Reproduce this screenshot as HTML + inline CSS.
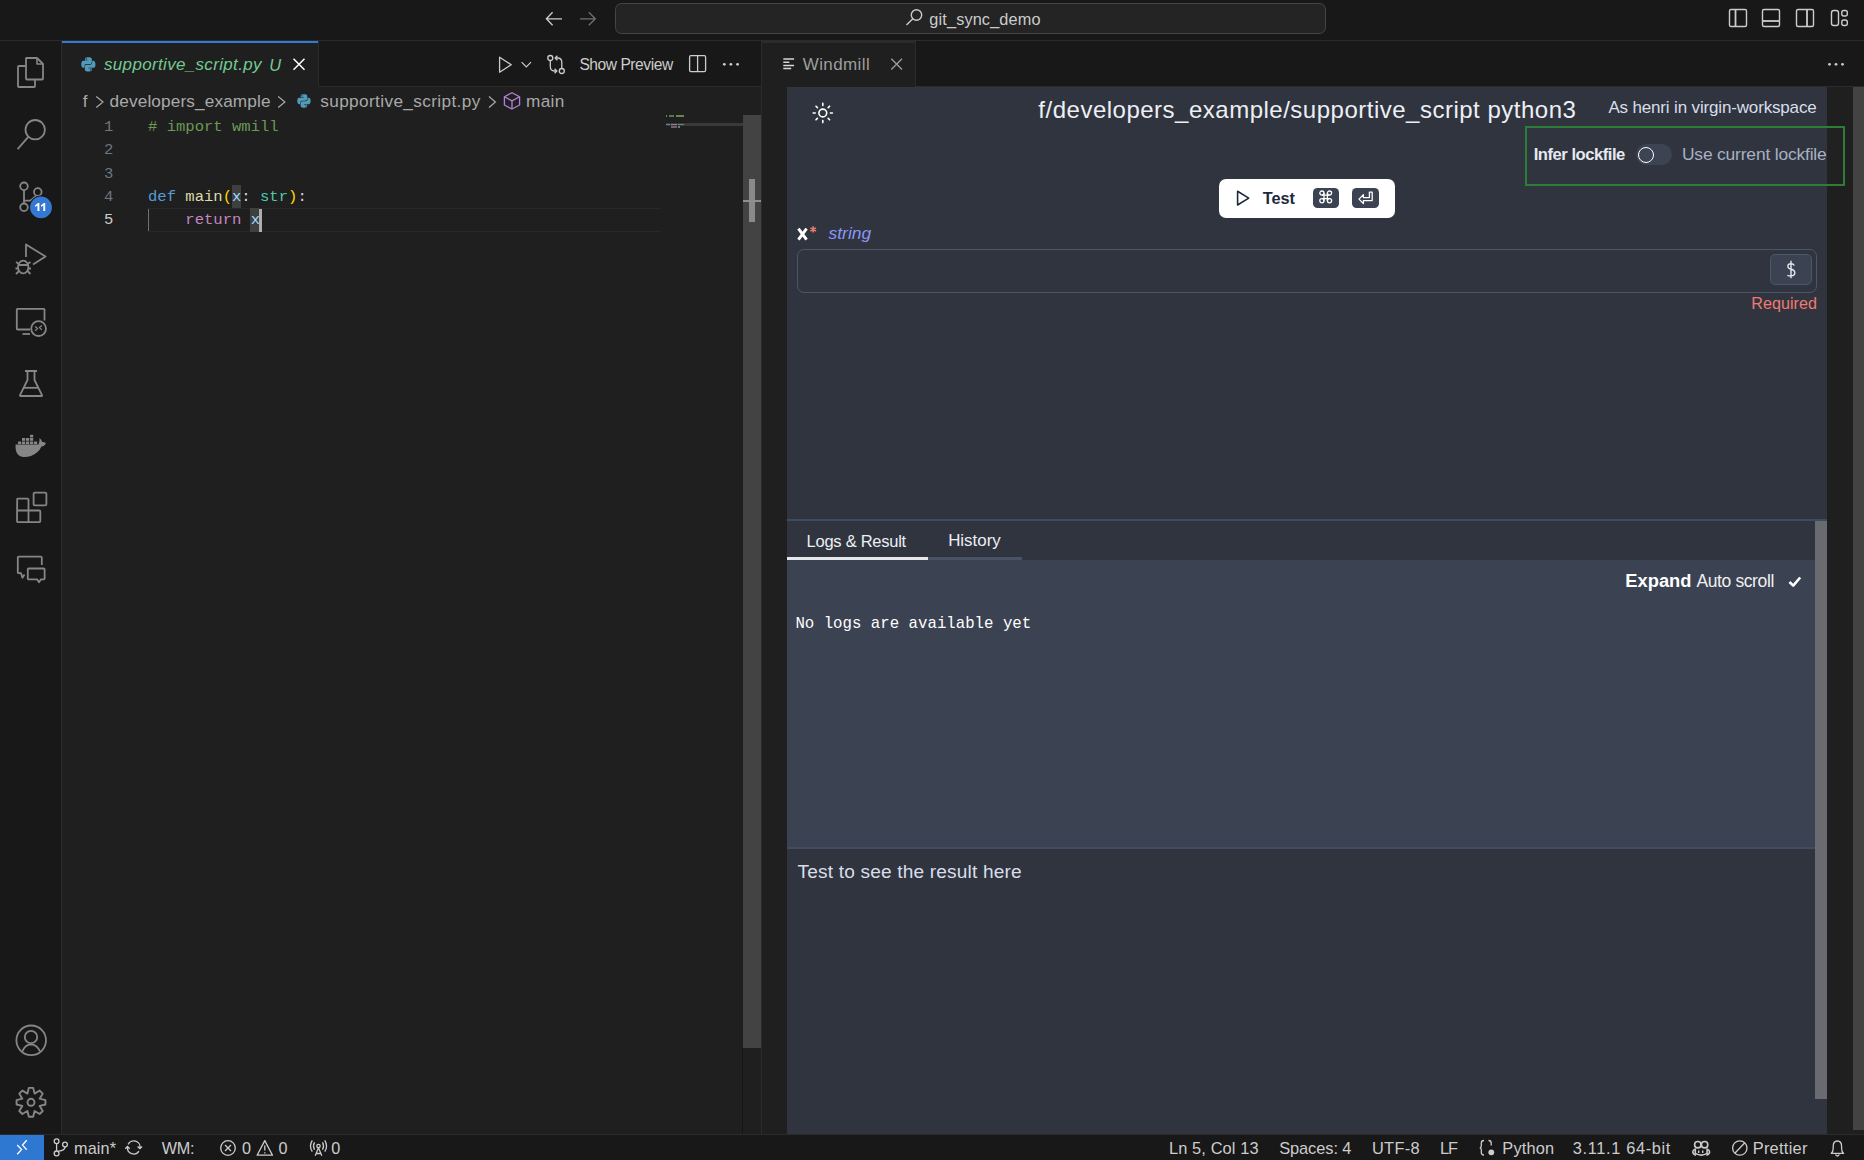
<!DOCTYPE html>
<html>
<head>
<meta charset="utf-8">
<style>
*{box-sizing:border-box;margin:0;padding:0}
html,body{width:1864px;height:1160px;overflow:hidden;background:#181818;font-family:"Liberation Sans",sans-serif;position:relative}
.abs{position:absolute}
.t{position:absolute;white-space:nowrap;line-height:1}
svg{position:absolute;overflow:visible}
.mono{font-family:"Liberation Mono",monospace}
</style>
</head>
<body>
<!-- TITLE BAR -->
<div class="abs" style="left:0;top:0;width:1864px;height:40px;background:#181818"></div>
<div class="abs" style="left:0;top:40px;width:1864px;height:1px;background:#2b2b2b"></div>


<!-- title content -->
<div class="abs" style="left:615px;top:3px;width:711px;height:31px;border-radius:6.5px;background:#242424;border:1px solid #454545"></div>
<svg width="1864" height="40" style="left:0;top:0" viewBox="0 0 1864 40" fill="none" stroke-width="1.5">
  <path d="M562 18.8 H546.4 M552.6 12.3 L546.4 18.8 L552.6 25.3" stroke="#cccccc" stroke-width="1.35"/>
  <path d="M580 18.8 H595.3 M588.8 12.3 L595.3 18.8 L588.8 25.3" stroke="#6f6f6f" stroke-width="1.35"/>
  <circle cx="916.5" cy="15" r="5.2" stroke="#cccccc" stroke-width="1.4"/>
  <path d="M912.8 18.8 L906.5 25" stroke="#cccccc" stroke-width="1.4"/>
  <!-- layout icons -->
  <g stroke="#cccccc" stroke-width="1.4">
    <rect x="1729.5" y="9.5" width="17" height="17" rx="1.5"/>
    <path d="M1735.5 9.5 V26.5" stroke-width="1.8"/>
    <rect x="1762.5" y="9.5" width="17" height="17" rx="1.5"/>
    <path d="M1762.5 21 H1779.5" stroke-width="1.8"/>
    <rect x="1796.5" y="9.5" width="17" height="17" rx="1.5"/>
    <path d="M1807 9.5 V26.5" stroke-width="1.8"/>
    <rect x="1831.5" y="10.5" width="7" height="15" rx="2.2"/>
    <rect x="1841.8" y="10.5" width="5.5" height="5.5" rx="2"/>
    <rect x="1841.8" y="20" width="5.5" height="5.5" rx="2"/>
  </g>
</svg>

<!-- ACTIVITY BAR -->
<div class="abs" style="left:0;top:41px;width:61px;height:1093px;background:#181818"></div>
<div class="abs" style="left:61px;top:41px;width:1px;height:1093px;background:#2b2b2b"></div>


<!-- activity icons -->
<svg width="62" height="1160" style="left:0;top:0" viewBox="0 0 62 1160" fill="none" stroke="#868686" stroke-width="1.8" stroke-linejoin="round">
  <!-- explorer -->
  <path d="M25.5 66 H19 Q18 66 18 67 V86 Q18 87 19 87 H34 Q35 87 35 86 V79.5"/>
  <path d="M26 58.5 Q26 58 27 58 H37 L43 64 V78.5 Q43 79.5 42 79.5 H27 Q26 79.5 26 78.5 Z"/>
  <path d="M37 58 V64 H43" stroke-width="1.6"/>
  <!-- search -->
  <circle cx="35.2" cy="129.7" r="9.7"/>
  <path d="M28.3 136.8 L17.6 149.2"/>
  <!-- scm -->
  <circle cx="24" cy="186.3" r="3.8"/>
  <circle cx="37.8" cy="192" r="3.8"/>
  <circle cx="24" cy="207.3" r="3.8"/>
  <path d="M24 190 V203.5"/>
  <path d="M24 200.6 H30.5 L36.3 195.6"/>
  <!-- run debug -->
  <path d="M26 257 V244.5 L45.5 256.5 L33 264.5"/>
  <ellipse cx="23.2" cy="267" rx="5.2" ry="6.3"/>
  <path d="M18 265 H28.5 M16 262 L19 264 M30.5 262 L27.5 264 M15.5 268.5 H18 M31 268.5 H28.5 M16 274 L19 271 M30.5 274 L27.5 271"/>
  <!-- remote -->
  <path d="M30 329.5 H17.5 Q16.8 329.5 16.8 328.8 V309.5 Q16.8 308.8 17.5 308.8 H43.8 Q44.5 308.8 44.5 309.5 V320.5"/>
  <path d="M22.5 334 H30"/>
  <circle cx="38.6" cy="328.6" r="7.4"/>
  <path d="M35.2 326.5 L37.5 328.6 L35.2 330.8 M41.8 325.5 L39.5 327.6 L41.8 329.8" stroke-width="1.3"/>
  <!-- testing flask -->
  <path d="M25 371 H37 M27.5 371 V380 L20 395.2 Q19.7 396 20.6 396 H41.6 Q42.4 396 42 395.2 L34.5 380 V371"/>
  <path d="M24 387.8 H38.5"/>
  <!-- extensions -->
  <path d="M17.2 499.5 Q17 499 17.5 498.7 H27.5 Q28.5 498.7 28.5 499.7 V510.5 H39.3 Q40.3 510.5 40.3 511.5 V521.3 Q40.3 522.2 39.3 522.2 H17.9 Q17 522.2 17 521.3 Z M17 510.5 H28.5 V522"/>
  <rect x="33.6" y="492.6" width="12.8" height="12.8" rx="1.2"/>
  <!-- chat -->
  <path d="M41.8 565 V557.5 Q41.8 556.6 40.8 556.6 H18.8 Q17.8 556.6 17.8 557.5 V572.5 Q17.8 573.2 18.6 573.2 H21 L22.4 577.8 L24.5 574.5"/>
  <path d="M28.5 568.5 H43.8 Q44.6 568.5 44.6 569.3 V578.6 Q44.6 579.3 43.8 579.3 H41 L39 582.3 L37 579.3 H28.5 Q27.8 579.3 27.8 578.6 V569.3 Q27.8 568.5 28.5 568.5 Z"/>
  <!-- account -->
  <circle cx="31.2" cy="1040.3" r="14.8"/>
  <circle cx="31" cy="1037" r="6.2"/>
  <path d="M22.3 1051.5 Q25 1044.5 31 1044.3 Q37 1044.5 40 1051.5"/>
  <!-- gear -->
  <path d="M28.83 1087.86 L33.17 1087.86 L34.60 1093.62 L39.67 1090.56 L42.74 1093.63 L39.68 1098.70 L45.44 1100.13 L45.44 1104.47 L39.68 1105.90 L42.74 1110.97 L39.67 1114.04 L34.60 1110.98 L33.17 1116.74 L28.83 1116.74 L27.40 1110.98 L22.33 1114.04 L19.26 1110.97 L22.32 1105.90 L16.56 1104.47 L16.56 1100.13 L22.32 1098.70 L19.26 1093.63 L22.33 1090.56 L27.40 1093.62 Z" stroke-width="1.9"/>
  <circle cx="31" cy="1102.3" r="3.5" stroke-width="1.9"/>
</svg>
<svg width="62" height="1160" style="left:0;top:0" viewBox="0 0 62 1160">
  <!-- docker -->
  <path fill="#868686" d="M15.6 444.5 H38.5 Q40 441 39.5 438 Q41.5 439.5 42.2 442 Q45 441.5 46 443.5 Q44.5 446 41.5 446.5 Q38.5 453 31 456 Q27 457.3 23 457 Q17 456 15.8 450 Q15.4 447 15.6 444.5 Z"/>
  <g fill="#868686">
    <rect x="18" y="441.5" width="3.2" height="2.6"/><rect x="22" y="441.5" width="3.2" height="2.6"/><rect x="26" y="441.5" width="3.2" height="2.6"/><rect x="30" y="441.5" width="3.2" height="2.6"/><rect x="34" y="441.5" width="3.2" height="2.6"/>
    <rect x="22" y="438" width="3.2" height="2.8"/><rect x="26" y="438" width="3.2" height="2.8"/><rect x="30" y="438" width="3.2" height="2.8"/>
    <rect x="30" y="434.8" width="3.2" height="2.6"/>
  </g>
  <!-- scm badge -->
  <circle cx="41" cy="207.4" r="11.8" fill="#181818"/>
  <circle cx="41" cy="207.4" r="10.9" fill="#3478d2"/>
  <path fill="#ffffff" d="M35.2 205.3 L38.1 203.1 H39.4 V210.9 H37.5 V205.6 L35.2 207.1 Z M41 205.3 L43.9 203.1 H45.2 V210.9 H43.3 V205.6 L41 207.1 Z"/>
</svg>


<!-- LEFT EDITOR GROUP -->
<div class="abs" style="left:62px;top:41px;width:699px;height:45px;background:#181818"></div>
<div class="abs" style="left:62px;top:86px;width:699px;height:1px;background:#2b2b2b"></div>
<div class="abs" style="left:62px;top:41px;width:256px;height:46px;background:#1f1f1f"></div>
<div class="abs" style="left:62px;top:41px;width:256px;height:2px;background:#2f7bd6"></div>
<div class="abs" style="left:318px;top:41px;width:1px;height:45px;background:#2b2b2b"></div>
<div class="abs" style="left:62px;top:87px;width:699px;height:1047px;background:#1f1f1f"></div>
<!-- group divider -->
<div class="abs" style="left:761px;top:41px;width:1px;height:1093px;background:#2b2b2b"></div>

<!-- RIGHT EDITOR GROUP -->
<div class="abs" style="left:762px;top:41px;width:1102px;height:45px;background:#181818"></div>
<div class="abs" style="left:762px;top:86px;width:1102px;height:1px;background:#2b2b2b"></div>
<div class="abs" style="left:762px;top:41px;width:153px;height:46px;background:#1f1f1f"></div>
<div class="abs" style="left:915px;top:41px;width:1px;height:45px;background:#2b2b2b"></div>
<div class="abs" style="left:762px;top:41px;width:153px;height:2px;background:#2b2b2b"></div>
<div class="abs" style="left:762px;top:87px;width:1102px;height:1047px;background:#1f1f1f"></div>

<!-- WEBVIEW -->
<div class="abs" style="left:787px;top:87px;width:1040px;height:1047px;background:#30343f"></div>

<!-- STATUS BAR -->
<div class="abs" style="left:0;top:1134px;width:1864px;height:1px;background:#2b2b2b"></div>
<div class="abs" style="left:0;top:1135px;width:1864px;height:25px;background:#181818"></div>
<div class="abs" style="left:0;top:1135px;width:44px;height:25px;background:#2f78d2"></div>


<!-- LEFT TAB ICONS & ACTIONS -->
<svg width="1864" height="120" style="left:0;top:0" viewBox="0 0 1864 120" fill="none">
  <!-- python icon in tab -->
  <g transform="translate(81,57) scale(0.92)">
    <path fill="#519aba" d="M7.9 0.2C4 0.2 4.3 1.9 4.3 1.9V3.7H8V4.2H2.8S0.3 3.9 0.3 7.9 2.5 11.8 2.5 11.8H3.8V9.9S3.7 7.7 6 7.7H9.7S11.8 7.7 11.8 5.6V2.2S12.1 0.2 7.9 0.2ZM5.8 1.4A.7.7 0 1 1 5.8 2.8.7.7 0 0 1 5.8 1.4Z"/>
    <path fill="#519aba" d="M8.1 15.8C12 15.8 11.7 14.1 11.7 14.1V12.3H8V11.8H13.2S15.7 12.1 15.7 8.1 13.5 4.2 13.5 4.2H12.2V6.1S12.3 8.3 10 8.3H6.3S4.2 8.3 4.2 10.4V13.8S3.9 15.8 8.1 15.8ZM10.2 14.6A.7.7 0 1 1 10.2 13.2.7.7 0 0 1 10.2 14.6Z"/>
  </g>
  <!-- close X -->
  <path d="M293.5 58.8 L304.5 69.8 M304.5 58.8 L293.5 69.8" stroke="#ffffff" stroke-width="1.5"/>
  <!-- play -->
  <path d="M499.6 57.2 V72.2 L511.2 64.7 Z" stroke="#cccccc" stroke-width="1.3" stroke-linejoin="round"/>
  <path d="M521.6 62.2 L526.3 66.9 L531 62.2" stroke="#cccccc" stroke-width="1.2"/>
  <!-- compare -->
  <g stroke="#cccccc" stroke-width="1.3">
    <circle cx="550.3" cy="58" r="2.5"/>
    <circle cx="561.8" cy="71" r="2.5"/>
    <path d="M550.3 60.5 V66.5 Q550.3 71 554.5 71 H557"/>
    <path d="M554.6 68.8 L556.8 71 L554.6 73.2"/>
    <path d="M561.8 68.5 V62.5 Q561.8 58 557.6 58 H555"/>
    <path d="M557.4 55.8 L555.2 58 L557.4 60.2"/>
  </g>
  <!-- split -->
  <rect x="689.6" y="55.6" width="16" height="16" rx="1.3" stroke="#cccccc" stroke-width="1.3"/>
  <path d="M697.6 55.6 V71.6" stroke="#cccccc" stroke-width="1.3"/>
  <!-- more -->
  <g fill="#cccccc"><circle cx="724.3" cy="64.3" r="1.4"/><circle cx="730.9" cy="64.3" r="1.4"/><circle cx="737.6" cy="64.3" r="1.4"/></g>
  <!-- breadcrumb chevrons -->
  <path d="M96.3 96.5 L103 102 L96.3 107.5 M278.2 96.5 L284.9 102 L278.2 107.5 M489 96.5 L495.4 102 L489 107.5" stroke="#a9a9a9" stroke-width="1.2"/>
  <!-- breadcrumb python -->
  <g transform="translate(297,94) scale(0.87)">
    <path fill="#519aba" d="M7.9 0.2C4 0.2 4.3 1.9 4.3 1.9V3.7H8V4.2H2.8S0.3 3.9 0.3 7.9 2.5 11.8 2.5 11.8H3.8V9.9S3.7 7.7 6 7.7H9.7S11.8 7.7 11.8 5.6V2.2S12.1 0.2 7.9 0.2ZM5.8 1.4A.7.7 0 1 1 5.8 2.8.7.7 0 0 1 5.8 1.4Z"/>
    <path fill="#519aba" d="M8.1 15.8C12 15.8 11.7 14.1 11.7 14.1V12.3H8V11.8H13.2S15.7 12.1 15.7 8.1 13.5 4.2 13.5 4.2H12.2V6.1S12.3 8.3 10 8.3H6.3S4.2 8.3 4.2 10.4V13.8S3.9 15.8 8.1 15.8ZM10.2 14.6A.7.7 0 1 1 10.2 13.2.7.7 0 0 1 10.2 14.6Z"/>
  </g>
  <!-- cube -->
  <g stroke="#b180d7" stroke-width="1.3" stroke-linejoin="round">
    <path d="M512 92.7 L519.6 96.8 V105 L512 109 L504.4 105 V96.8 Z"/>
    <path d="M504.4 96.8 L512 100.9 L519.6 96.8 M512 100.9 V109"/>
  </g>
  <!-- windmill tab icon -->
  <g stroke="#d6d6d6" stroke-width="1.5">
    <path d="M783.3 59 H794.1 M783.3 62.2 H789.3 M783.3 65.4 H794.1 M783.3 68.6 H791.2"/>
  </g>
  <path d="M891.3 58.8 L902 69.5 M902 58.8 L891.3 69.5" stroke="#9d9d9d" stroke-width="1.3"/>
  <g fill="#cccccc"><circle cx="1829.5" cy="64.3" r="1.4"/><circle cx="1836" cy="64.3" r="1.4"/><circle cx="1842.5" cy="64.3" r="1.4"/></g>
</svg>

<!-- CODE -->
<div class="abs" style="left:148px;top:208.4px;width:513px;height:23.3px;border-top:1.5px solid #282828;border-bottom:1.5px solid #282828"></div>
<div class="abs" style="left:148px;top:209px;width:1.2px;height:22px;background:#707070"></div>
<div class="abs" style="left:232px;top:185.1px;width:9.3px;height:23.3px;background:#3f3f3f"></div>
<div class="abs" style="left:250px;top:208.4px;width:9.3px;height:23.3px;background:#3f3f3f"></div>
<div class="abs" style="left:259.2px;top:208.8px;width:2.8px;height:22.8px;background:#aeafad"></div>
<div class="code" style="position:absolute;left:148px;top:0;font-family:'Liberation Mono',monospace;font-size:15.55px;line-height:1;white-space:pre">
<div class="abs" style="left:0;top:120.1px"><span style="color:#6a9955"># import wmill</span></div>
<div class="abs" style="left:0;top:190px"><span style="color:#569cd6">def</span> <span style="color:#dcdcaa">main</span><span style="color:#ffd700">(</span><span style="color:#9cdcfe">x</span><span style="color:#d4d4d4">: </span><span style="color:#4ec9b0">str</span><span style="color:#ffd700">)</span><span style="color:#d4d4d4">:</span></div>
<div class="abs" style="left:0;top:213.3px">    <span style="color:#c586c0">return</span> <span style="color:#9cdcfe">x</span></div>
</div>
<div style="position:absolute;left:0;top:0;font-family:'Liberation Mono',monospace;font-size:15.55px;line-height:1;white-space:pre;color:#6e7681">
<div class="abs" style="left:104px;top:120.1px">1</div>
<div class="abs" style="left:104px;top:143.4px">2</div>
<div class="abs" style="left:104px;top:166.7px">3</div>
<div class="abs" style="left:104px;top:190px">4</div>
<div class="abs" style="left:104px;top:213.3px;color:#cccccc">5</div>
</div>
<!-- minimap -->
<div class="abs" style="left:666px;top:123px;width:77px;height:3px;background:#3a3a3a"></div>
<div class="abs" style="left:666px;top:115.3px;width:1.2px;height:1.8px;background:#5f8a4c"></div>
<div class="abs" style="left:668.5px;top:115.3px;width:5.8px;height:1.8px;background:#557a45"></div>
<div class="abs" style="left:675.8px;top:115.3px;width:8.2px;height:1.8px;background:#5f8a4c"></div>
<div class="abs" style="left:666px;top:123.5px;width:3.5px;height:1.8px;background:#5e86ad"></div>
<div class="abs" style="left:670.8px;top:123.5px;width:6px;height:1.8px;background:#8d8c78"></div>
<div class="abs" style="left:678px;top:123.5px;width:6px;height:1.8px;background:#5e8a80"></div>
<div class="abs" style="left:671px;top:126.1px;width:5.8px;height:1.7px;background:#7a5a77"></div>
<div class="abs" style="left:678.2px;top:126.1px;width:1.6px;height:1.7px;background:#6a7a88"></div>
<!-- scrollbar -->
<div class="abs" style="left:743px;top:115px;width:18px;height:933px;background:#434343"></div>
<div class="abs" style="left:742px;top:1048px;width:1px;height:86px;background:#151515"></div>
<div class="abs" style="left:749px;top:179px;width:6px;height:43px;background:#8a8a8a"></div>
<div class="abs" style="left:743px;top:199.5px;width:18px;height:2px;background:#8f8f8f"></div>


<!-- WEBVIEW DETAILS -->
<!-- right strip gray -->
<div class="abs" style="left:1853px;top:87px;width:11px;height:1043px;background:#434343"></div>
<!-- sun icon -->
<svg width="40" height="40" style="left:803px;top:92.5px" viewBox="0 0 40 40" fill="none" stroke="#ffffff" stroke-width="1.6" stroke-linecap="round">
  <circle cx="19.8" cy="20" r="3.9"/>
  <path d="M19.8 10.4 V12.4 M19.8 27.6 V29.6 M10.2 20 H12.2 M27.4 20 H29.4 M13 13.2 L14.4 14.6 M25.2 25.4 L26.6 26.8 M13 26.8 L14.4 25.4 M25.2 14.6 L26.6 13.2"/>
</svg>
<!-- green box: dark region inside right of panel -->
<div class="abs" style="left:1827px;top:126px;width:18px;height:59px;background:#202120"></div>
<div class="abs" style="left:1525px;top:125.5px;width:320px;height:60px;border:2px solid #2e7d36"></div>
<!-- toggle -->
<div class="abs" style="left:1636.3px;top:144.2px;width:35.5px;height:20.7px;border-radius:10.5px;background:#3c4352"></div>
<div class="abs" style="left:1638.2px;top:146.8px;width:16px;height:16px;border-radius:50%;border:1.6px solid #ffffff;background:#3c4352"></div>
<!-- Test button -->
<div class="abs" style="left:1219px;top:179px;width:176px;height:39px;border-radius:7px;background:#ffffff"></div>
<svg width="20" height="20" style="left:1235px;top:188px" viewBox="0 0 20 20" fill="none">
  <path d="M2.6 3.3 V17 L13.7 10.15 Z" stroke="#1e293b" stroke-width="1.6" stroke-linejoin="round"/>
</svg>
<div class="abs" style="left:1312.7px;top:188px;width:26.3px;height:20.4px;border-radius:4.5px;background:#3b4252"></div>
<div class="abs" style="left:1352px;top:188px;width:27.2px;height:20.4px;border-radius:4.5px;background:#3b4252"></div>
<svg width="20" height="20" style="left:1316px;top:188px" viewBox="0 0 20 20" fill="none" stroke="#ffffff" stroke-width="1.3">
  <path d="M8 5.1 V12.7 M11.4 5.1 V12.7 M5.9 7.2 H13.5 M5.9 10.6 H13.5"/>
  <circle cx="5.9" cy="5.1" r="2.1"/><circle cx="13.5" cy="5.1" r="2.1"/><circle cx="5.9" cy="12.7" r="2.1"/><circle cx="13.5" cy="12.7" r="2.1"/>
</svg>
<svg width="20" height="20" style="left:1356px;top:188px" viewBox="0 0 20 20" fill="none" stroke="#ffffff" stroke-width="1.3" stroke-linejoin="round">
  <path d="M16.2 4.2 V12.6 H7.4 V15.6 L3 11.1 L7.4 6.6 V9.6 H13.4 V4.2 Z"/>
</svg>
<!-- x* label -->
<svg width="30" height="30" style="left:795px;top:222px" viewBox="0 0 30 30" fill="none">
  <path d="M3.4 6.6 L11.6 17.6 M11.6 6.6 L3.4 17.6" stroke="#ffffff" stroke-width="2.9"/>
  <path d="M18.2 4.3 V10.6 M15.4 5.9 L21 9 M15.4 9 L21 5.9" stroke="#f07a72" stroke-width="1.5"/>
</svg>
<!-- input -->
<div class="abs" style="left:797px;top:249px;width:1020px;height:44px;border-radius:7px;border:1.3px solid #4c566a"></div>
<div class="abs" style="left:1770.2px;top:254.2px;width:41.4px;height:30.8px;border-radius:5px;border:1px solid #4c566a;background:#3b4252"></div>
<svg width="20" height="24" style="left:1781px;top:259px" viewBox="0 0 20 24" fill="none" stroke="#e5e9f0" stroke-width="1.4">
  <path d="M13.3 6.6 Q12.5 4.7 9.8 4.7 Q6.9 4.7 6.9 7.3 Q6.9 9.5 10 10.2 Q13.8 11 13.8 13.8 Q13.8 16.9 10 16.9 Q7.5 16.9 6.4 16.3 M10 1.7 V19.3"/>
</svg>
<!-- splitter 1 -->
<div class="abs" style="left:787px;top:519px;width:1040px;height:2px;background:#3e4a5e"></div>
<!-- logs tabs -->
<div class="abs" style="left:787px;top:557px;width:141px;height:3px;background:#e5e7eb"></div>
<div class="abs" style="left:928px;top:557px;width:94px;height:3px;background:#4a5366"></div>
<div class="abs" style="left:1022px;top:559.5px;width:793px;height:1px;background:#4c566a"></div>
<!-- logs area -->
<div class="abs" style="left:787px;top:560px;width:1028px;height:287.5px;background:#3b4252"></div>
<svg width="20" height="20" style="left:1785px;top:571px" viewBox="0 0 20 20" fill="none">
  <path d="M4.5 11 L8.2 14.6 L15.2 6.5" stroke="#ffffff" stroke-width="2.6" stroke-linejoin="round"/>
</svg>
<!-- splitter 2 -->
<div class="abs" style="left:787px;top:847.3px;width:1028px;height:1.5px;background:#404c5f"></div>
<!-- webview scrollbar -->
<div class="abs" style="left:1815px;top:521px;width:12px;height:578px;background:#6a6b71"></div>


<!-- STATUS BAR ICONS -->
<svg width="1864" height="30" style="left:0;top:1130px" viewBox="0 1130 1864 30" fill="none" stroke="#cccccc" stroke-width="1.3">
  <!-- remote -->
  <path d="M17.2 1145 L21.6 1149.5 L17.2 1154.2 M26.7 1140.3 L22.5 1145.1 L26.7 1149.7" stroke="#ffffff" stroke-width="1.3"/>
  <!-- branch -->
  <circle cx="56.6" cy="1141.3" r="2.4"/>
  <circle cx="56.6" cy="1153.4" r="2.4"/>
  <circle cx="65" cy="1144.6" r="2.4"/>
  <path d="M56.6 1143.7 V1151 M65 1147 Q65 1150.5 58.5 1151.2"/>
  <!-- sync -->
  <path d="M128.2 1144.4 A6.2 6.2 0 0 1 139.9 1148.2 M137.6 1146.5 L139.9 1148.7 L142 1146.5"/>
  <path d="M138.9 1151.2 A6.2 6.2 0 0 1 127.5 1147.4 M125.3 1148.7 L127.5 1146.5 L129.7 1148.7"/>
  <!-- error -->
  <circle cx="228" cy="1148" r="7.3"/>
  <path d="M225 1145 L231 1151 M231 1145 L225 1151"/>
  <!-- warning -->
  <path d="M264.8 1140.6 L272.5 1155.2 H257.1 Z" stroke-linejoin="round"/>
  <path d="M264.8 1145.5 V1150.5 M264.8 1152.3 V1153.4"/>
  <!-- broadcast -->
  <circle cx="318.5" cy="1146" r="1.7"/>
  <path d="M318.5 1147.8 L315.2 1155.8 M318.5 1147.8 L321.8 1155.8 M315.9 1153.5 H321.1"/>
  <path d="M314.5 1142.3 Q312.5 1146 314.5 1149.7 M322.5 1142.3 Q324.5 1146 322.5 1149.7 M312.3 1140.3 Q308.6 1146 312.3 1151.7 M324.7 1140.3 Q328.4 1146 324.7 1151.7"/>
  <!-- braces -->
  <path d="M1484 1140.5 Q1481.3 1140.5 1481.3 1143 V1146 Q1481.3 1147.6 1479.8 1147.8 Q1481.3 1148 1481.3 1149.6 V1152.5 Q1481.3 1155 1484 1155"/>
  <path d="M1488.5 1140.5 Q1491.2 1140.5 1491.2 1143 V1145.5"/>
  <circle cx="1491.3" cy="1152.3" r="2.9" fill="#cccccc" stroke="none"/>
  <!-- copilot -->
  <circle cx="1697.8" cy="1144.7" r="3.2" stroke-width="1.6"/>
  <circle cx="1704.6" cy="1144.7" r="3.2" stroke-width="1.6"/>
  <path d="M1695.3 1148.6 V1153.4 Q1701.2 1156.8 1707.1 1153.4 V1148.6" stroke-width="1.6"/>
  <path d="M1695 1149.3 Q1692.8 1150.2 1692.8 1152 Q1693 1154.3 1696 1155.2 M1707.4 1149.3 Q1709.6 1150.2 1709.6 1152 Q1709.4 1154.3 1706.4 1155.2" stroke-width="1.6"/>
  <path d="M1698.7 1150.4 V1153 M1702.7 1150.4 V1153" stroke-width="1.4"/>
  <!-- prohibit -->
  <circle cx="1739.8" cy="1148" r="7.2"/>
  <path d="M1744.8 1142.8 L1734.8 1153.2"/>
  <!-- bell -->
  <path d="M1831.2 1153.4 H1843.6 Q1841.6 1151.6 1841.6 1148.5 V1146.5 Q1841.6 1141 1837.4 1141 Q1833.2 1141 1833.2 1146.5 V1148.5 Q1833.2 1151.6 1831.2 1153.4 Z" stroke-linejoin="round"/>
  <path d="M1835.6 1154.4 Q1836 1156 1837.4 1156 Q1838.8 1156 1839.2 1154.4"/>
</svg>

<div class="t" style="left:929.35px;top:10.53px;font-size:16.3px;color:#cccccc;letter-spacing:0.134px;">git_sync_demo</div>
<div class="t" style="left:104.00px;top:56.38px;font-size:17.0px;color:#73c991;font-style:italic;letter-spacing:0.331px;">supportive_script.py</div>
<div class="t" style="left:269.35px;top:56.89px;font-size:16.4px;color:#73c991;font-style:italic;">U</div>
<div class="t" style="left:579.38px;top:56.82px;font-size:15.6px;color:#cccccc;letter-spacing:-0.458px;">Show Preview</div>
<div class="t" style="left:82.63px;top:93.14px;font-size:17.0px;color:#a9a9a9;">f</div>
<div class="t" style="left:109.61px;top:92.97px;font-size:17.2px;color:#a9a9a9;letter-spacing:0.135px;">developers_example</div>
<div class="t" style="left:320.26px;top:92.67px;font-size:17.2px;color:#a9a9a9;letter-spacing:0.378px;">supportive_script.py</div>
<div class="t" style="left:525.97px;top:92.67px;font-size:17.2px;color:#a9a9a9;letter-spacing:0.339px;">main</div>
<div class="t" style="left:802.80px;top:56.13px;font-size:17.0px;color:#9d9d9d;letter-spacing:0.376px;">Windmill</div>
<div class="t" style="left:1038.36px;top:98.02px;font-size:24.0px;color:#eceff4;letter-spacing:0.501px;">f/developers_example/supportive_script python3</div>
<div class="t" style="left:1608.40px;top:98.84px;font-size:17.0px;color:#d8dee9;letter-spacing:-0.158px;">As henri in virgin-workspace</div>
<div class="t" style="left:1533.70px;top:146.57px;font-size:16.6px;color:#e5e9f0;font-weight:700;letter-spacing:-0.473px;">Infer lockfile</div>
<div class="t" style="left:1681.98px;top:145.90px;font-size:17.4px;color:#a7b1c2;letter-spacing:-0.163px;">Use current lockfile</div>
<div class="t" style="left:1262.84px;top:189.63px;font-size:16.3px;color:#1e293b;font-weight:700;letter-spacing:-0.031px;">Test</div>
<div class="t" style="left:828.60px;top:224.80px;font-size:17.4px;color:#8a96f7;font-style:italic;">string</div>
<div class="t" style="left:1751.21px;top:294.50px;font-size:16.1px;color:#f07a72;letter-spacing:0.051px;">Required</div>
<div class="t" style="left:806.58px;top:532.86px;font-size:16.5px;color:#eceff4;letter-spacing:-0.261px;">Logs &amp; Result</div>
<div class="t" style="left:948.15px;top:533.22px;font-size:16.9px;color:#eceff4;letter-spacing:0.012px;">History</div>
<div class="t" style="left:1625.30px;top:571.94px;font-size:18.3px;color:#ffffff;font-weight:700;letter-spacing:0.023px;">Expand</div>
<div class="t" style="left:1696.50px;top:572.61px;font-size:17.5px;color:#f0f0f0;letter-spacing:-0.391px;">Auto scroll</div>
<div class="t" style="left:795.40px;top:616.53px;font-size:15.72px;color:#ffffff;font-family:'Liberation Mono',monospace;">No logs are available yet</div>
<div class="t" style="left:797.62px;top:861.66px;font-size:19.1px;color:#d8dee9;letter-spacing:0.169px;">Test to see the result here</div>
<div class="t" style="left:74.03px;top:1140.31px;font-size:16.2px;color:#cccccc;letter-spacing:0.151px;">main*</div>
<div class="t" style="left:161.80px;top:1140.31px;font-size:16.2px;color:#cccccc;letter-spacing:-0.332px;">WM:</div>
<div class="t" style="left:241.91px;top:1140.31px;font-size:16.2px;color:#cccccc;">0</div>
<div class="t" style="left:278.51px;top:1140.31px;font-size:16.2px;color:#cccccc;">0</div>
<div class="t" style="left:331.31px;top:1140.31px;font-size:16.2px;color:#cccccc;">0</div>
<div class="t" style="left:1168.99px;top:1139.64px;font-size:16.4px;color:#cccccc;letter-spacing:0.106px;">Ln 5, Col 13</div>
<div class="t" style="left:1279.14px;top:1139.64px;font-size:16.4px;color:#cccccc;letter-spacing:-0.069px;">Spaces: 4</div>
<div class="t" style="left:1371.95px;top:1139.64px;font-size:16.4px;color:#cccccc;letter-spacing:0.320px;">UTF-8</div>
<div class="t" style="left:1439.99px;top:1139.64px;font-size:16.4px;color:#cccccc;letter-spacing:-1.021px;">LF</div>
<div class="t" style="left:1502.29px;top:1139.64px;font-size:16.4px;color:#cccccc;letter-spacing:0.175px;">Python</div>
<div class="t" style="left:1572.71px;top:1139.64px;font-size:16.4px;color:#cccccc;letter-spacing:0.650px;">3.11.1 64-bit</div>
<div class="t" style="left:1752.69px;top:1139.64px;font-size:16.4px;color:#cccccc;letter-spacing:0.267px;">Prettier</div>
</body>
</html>
